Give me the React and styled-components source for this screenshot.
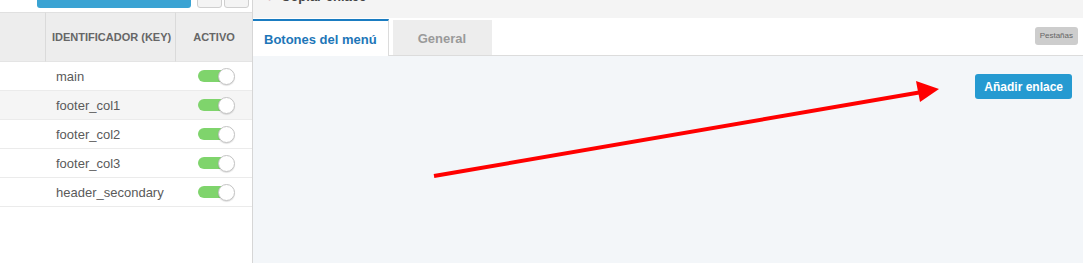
import React from "react";
import styled, { createGlobalStyle } from "styled-components";

const Global = createGlobalStyle`
  html, body { margin: 0; padding: 0; background: #fff; }
  body { font-family: "Liberation Sans", Arial, sans-serif; }
  * { box-sizing: border-box; }
`;

const Page = styled.div`
  position: relative;
  display: flex;
  width: 1083px;
  height: 263px;
  overflow: hidden;
`;

const LeftPanel = styled.div`
  width: 253px;
  flex: none;
  background: #fff;
  border-right: 1px solid #d6d6d6;
  display: flex;
  flex-direction: column;
`;

const TopBar = styled.div`
  height: 12px;
  display: flex;
  align-items: flex-end;
  padding: 0 0 4px 37px;
  gap: 6px;
  overflow: hidden;
`;

const PrimaryButton = styled.div`
  width: 154px;
  height: 30px;
  flex: none;
  background: #3aa3d3;
  border-radius: 3px;
`;

const SmallButton = styled.div`
  width: 25px;
  height: 30px;
  flex: none;
  margin-left: ${(p) => p.$ml || 0}px;
  background: #f4f4f4;
  border: 1px solid #cfcfcf;
  border-radius: 3px;
`;

const Table = styled.div`
  display: grid;
  grid-template-columns: 46px 130px 76px;
`;

const HeadCell = styled.div`
  height: 50px;
  background: #ededed;
  border-top: 1px solid #e0e0e0;
  border-right: ${(p) => (p.$last ? "none" : "1px solid #dadada")};
  border-bottom: 1px solid #e4e4e4;
  display: flex;
  align-items: center;
  justify-content: ${(p) => (p.$center ? "center" : "flex-start")};
  padding-left: ${(p) => (p.$center ? 0 : 6)}px;
  font-size: 11px;
  font-weight: bold;
  color: #666;
  white-space: nowrap;
`;

const Cell = styled.div`
  height: 29px;
  background: ${(p) => (p.$alt ? "#f5f5f5" : "#fff")};
  border-bottom: 1px solid #ebebeb;
  display: flex;
  align-items: center;
  justify-content: ${(p) => (p.$center ? "center" : "flex-start")};
  padding-left: ${(p) => (p.$center ? 0 : 10)}px;
  font-size: 13px;
  color: #5a5a5a;
`;

const Toggle = styled.div`
  position: relative;
  width: 37px;
  height: 16px;
  margin-left: 4px;
`;

const Track = styled.div`
  position: absolute;
  left: 0;
  top: 2px;
  width: 32px;
  height: 12px;
  border-radius: 6px;
  background: #7fd46c;
`;

const Knob = styled.div`
  position: absolute;
  right: 0;
  top: 0;
  width: 17px;
  height: 17px;
  border-radius: 50%;
  background: #fff;
  border: 1px solid #c4c4c4;
  box-shadow: 0 1px 1px rgba(0, 0, 0, 0.12);
`;

const RightPanel = styled.div`
  flex: 1;
  display: flex;
  flex-direction: column;
  background: #f3f6f9;
`;

const TopStrip = styled.div`
  height: 18px;
  background: #f4f4f4;
  display: flex;
  align-items: flex-end;
  padding: 0 0 14px 9px;
  gap: 10px;
  overflow: hidden;
  font-size: 13px;
  font-weight: bold;
  color: #444;
`;

const CopyIcon = styled.span`
  color: #b05a7a;
  font-size: 11px;
`;

const TabBar = styled.div`
  height: 38px;
  background: #fff;
  border-bottom: 1px solid #dcdcdc;
  display: flex;
  align-items: flex-end;
  padding-right: 5px;
`;

const Tab = styled.div`
  height: ${(p) => (p.$active ? 37 : 35)}px;
  padding: 0 ${(p) => (p.$active ? 11 : 26)}px 0 ${(p) => (p.$active ? 11 : 25)}px;
  margin-right: ${(p) => (p.$active ? 4 : 0)}px;
  display: flex;
  align-items: center;
  font-size: 13px;
  font-weight: bold;
  background: ${(p) => (p.$active ? "#fff" : "#ededed")};
  color: ${(p) => (p.$active ? "#1d76b8" : "#9a9a9a")};
  border-top: ${(p) => (p.$active ? "2px solid #1a7cc1" : "none")};
  border-right: ${(p) => (p.$active ? "1px solid #dcdcdc" : "none")};
  margin-bottom: ${(p) => (p.$active ? -1 : 0)}px;
  padding-top: 2px;
`;

const Spacer = styled.div`
  flex: 1;
`;

const Badge = styled.div`
  align-self: center;
  margin-top: -2px;
  height: 18px;
  display: flex;
  align-items: center;
  padding: 0 5px;
  background: #cdcdcd;
  border-radius: 3px;
  font-size: 8px;
  color: #666;
`;

const Content = styled.div`
  flex: 1;
  display: flex;
  justify-content: flex-end;
  align-items: flex-start;
  padding: 18px 11px 0 0;
`;

const AddButton = styled.button`
  height: 25px;
  padding: 0 9px;
  border: none;
  border-radius: 3px;
  background: #259ad1;
  color: #fff;
  font-family: "Liberation Sans", Arial, sans-serif;
  font-size: 12px;
  font-weight: bold;
`;

const ArrowOverlay = styled.svg`
  position: absolute;
  left: 0;
  top: 0;
  pointer-events: none;
`;

const rows = ["main", "footer_col1", "footer_col2", "footer_col3", "header_secondary"];

export default function App() {
  return (
    <>
      <Global />
      <Page>
        <LeftPanel>
          <TopBar>
            <PrimaryButton />
            <SmallButton />
            <SmallButton $ml={-4} />
          </TopBar>
          <Table>
            <HeadCell />
            <HeadCell>IDENTIFICADOR (KEY)</HeadCell>
            <HeadCell $center $last>ACTIVO</HeadCell>
            {rows.map((r, i) => (
              <React.Fragment key={r}>
                <Cell $alt={i === 1} />
                <Cell $alt={i === 1}>{r}</Cell>
                <Cell $alt={i === 1} $center>
                  <Toggle>
                    <Track />
                    <Knob />
                  </Toggle>
                </Cell>
              </React.Fragment>
            ))}
          </Table>
        </LeftPanel>
        <RightPanel>
          <TopStrip>
            <CopyIcon>✎</CopyIcon>
            <span>Copiar enlace</span>
          </TopStrip>
          <TabBar>
            <Tab $active>Botones del menú</Tab>
            <Tab>General</Tab>
            <Spacer />
            <Badge>Pestañas</Badge>
          </TabBar>
          <Content>
            <AddButton>Añadir enlace</AddButton>
          </Content>
        </RightPanel>
        <ArrowOverlay width="1083" height="263" viewBox="0 0 1083 263">
          <line x1="434" y1="176" x2="922" y2="92" stroke="#ff0000" strokeWidth="4" />
          <polygon points="939,89 916,81 920,102" fill="#ff0000" />
        </ArrowOverlay>
      </Page>
    </>
  );
}
